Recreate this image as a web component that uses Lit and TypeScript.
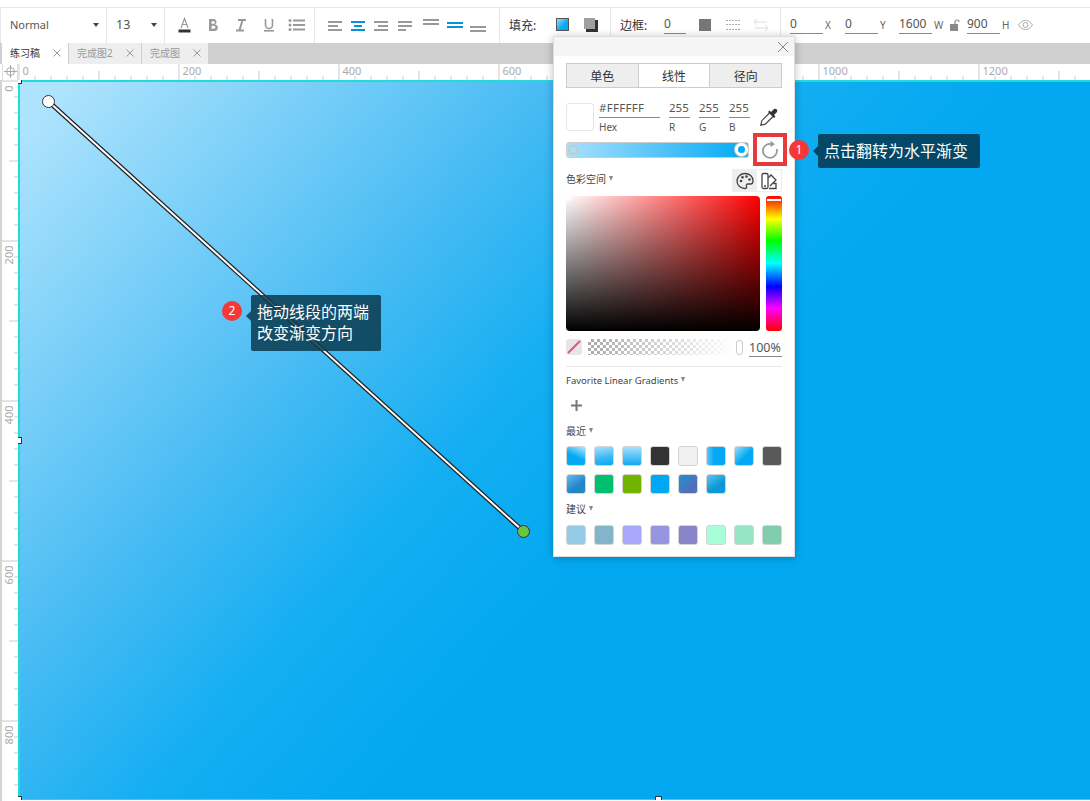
import { LitElement, html, css, svg } from 'lit';
import { customElement } from 'lit/decorators.js';

const RECENT = [
  'linear-gradient(205deg,#b4e6fd 0%,#03a9f4 55%)',
  'linear-gradient(170deg,#a8e0fc 0%,#38b8f6 60%,#03a9f4 100%)',
  'linear-gradient(180deg,#a8e0fc 0%,#10aaf2 100%)',
  '#333333',
  '#f0f0f0',
  'linear-gradient(90deg,#5cc5f8 0%,#03a9f4 40%)',
  'linear-gradient(135deg,#9adcfb 0%,#03a9f4 55%)',
  '#595959',
  'linear-gradient(145deg,#60bdf0 0%,#2386c8 60%)',
  '#00c070',
  '#70b400',
  '#00a8f4',
  'linear-gradient(135deg,#2190d4 0%,#5070b8 70%)',
  'linear-gradient(145deg,#60c4f4 0%,#0c98d8 60%)',
];

const SUGGESTED = ['#94cbe6', '#82b4ca', '#a8a8ff', '#9595e2', '#8a83ca', '#a6ffd8', '#96e6c6', '#82cdac'];

const lines = (rows: number[][], color = '#999', h = 2) => html`
  <svg width="20" height="20" viewBox="0 0 20 20">
    ${rows.map(([x, y, w]) => svg`<rect x=${x} y=${y} width=${w} height=${h} fill=${color}></rect>`)}
  </svg>
`;

const tabClose = html`
  <svg width="8" height="8" viewBox="0 0 8 8"><path d="M.5.5l7 7M7.500.5l-7 7" stroke="#999" fill="none"></path></svg>
`;

@customElement('app-root')
export class AppRoot extends LitElement {
  static styles = css`
    :host {
      display: block;
      position: relative;
      width: 1090px;
      height: 801px;
      overflow: hidden;
      background: #fff;
      font-family: "Noto Sans", "Noto Sans CJK SC", sans-serif;
      color: #444;
    }
    .page {
      display: flex;
      flex-direction: column;
      height: 801px;
      padding-top: 7px;
      box-sizing: border-box;
    }
    .toolbar {
      display: flex;
      height: 35px;
      flex: none;
      border-top: 1px solid #e6e6e6;
      border-left: 1px solid #e6e6e6;
      font-size: 11px;
      color: #555;
    }
    .group {
      display: flex;
      align-items: center;
      border-right: 1px solid #e6e6e6;
      box-sizing: border-box;
      padding-bottom: 2px;
    }
    .g-font { width: 106px; padding-left: 9px; justify-content: space-between; padding-right: 7px; }
    .g-size { width: 58px; padding-left: 9px; justify-content: space-between; padding-right: 7px; font-size: 12.5px; }
    .g-style { width: 150px; padding-left: 6px; }
    .g-align { width: 185px; padding-left: 8px; }
    .g-fill { width: 111px; padding-left: 9px; }
    .g-border { width: 170px; padding-left: 9px; }
    .g-pos { border-right: none; padding-left: 9px; }
    .caret {
      width: 0;
      height: 0;
      border: 3.5px solid transparent;
      border-top: 4px solid #444;
      border-bottom: none;
    }
    .cell {
      width: 28px;
      height: 24px;
      display: flex;
      align-items: center;
      justify-content: center;
      flex: none;
    }
    .g-align .cell { width: 23.4px; }
    .g-align .spaced { margin-left: 3px; }
    .fill-label { flex: none; color: #333; font-size: 12px; }
    .fill-label.w-fill { width: 40px; }
    .fill-label.w-border { width: 44px; }
    .field {
      box-sizing: border-box;
      height: 19px;
      line-height: 17px;
      border-bottom: 1px solid #888;
      flex: none;
      color: #555;
      font-size: 12px;
    }
    .f-border { width: 22px; margin-right: 5px; }
    .f-pos { width: 33px; }
    .unit { flex: none; font-size: 10px; color: #666; padding-left: 2px; box-sizing: border-box; }
    .u-x { width: 22px; }
    .u-y { width: 21px; }
    .u-w { width: 18px; }
    .u-h { width: 18px; }
    .lock { width: 17px; flex: none; display: flex; }
    .eye { display: flex; }

    .tabs {
      display: flex;
      height: 21px;
      flex: none;
      background: #cfcfcf;
      padding-left: 2px;
      gap: 1px;
      font-size: 10px;
    }
    .tab {
      display: flex;
      align-items: center;
      justify-content: space-between;
      padding: 0 7px 2px 8px;
      box-sizing: border-box;
      background: #eeeeee;
      color: #999;
    }
    .tab.on { background: #fff; color: #333; width: 66px; }
    .tab.mid { width: 72px; }
    .tab.last { width: 66px; }

    .ruler-row { display: flex; height: 16px; flex: none; }
    .corner {
      width: 16px;
      margin-left: 2px;
      padding-bottom: 1px;
      display: flex;
      align-items: center;
      justify-content: center;
      flex: none;
      border-left: 1px solid #ddd;
      border-right: 1px solid #ddd;
      box-sizing: border-box;
      background: #fff;
    }
    .work { display: flex; flex: 1; min-height: 0; }
    .v-ruler {
      width: 18px;
      flex: none;
      box-sizing: border-box;
      border-left: 2px solid #d4d4d4;
    }
    .canvas {
      flex: 1;
      position: relative;
      overflow: hidden;
      height: 720px;
      box-shadow: inset 2px 2px 0 #1fdcd8, inset 0 -1px 0 #1fdcd8;
      background: linear-gradient(132deg, #aee3fd 3%, #44baf3 32%, #14aef2 45%, #03a8f1 58%);
    }
    .overlay { position: absolute; left: 0; top: 0; pointer-events: none; }
    .handle {
      position: absolute;
      width: 5px;
      height: 5px;
      background: #fff;
      border: 1px solid #333;
    }
    .h-tl { left: -3px; top: -3px; }
    .h-ml { left: -3px; top: 357px; }
    .h-bl { left: -3px; top: 716px; }
    .h-bm { left: 637px; top: 716px; }

    .panel {
      position: absolute;
      left: 553px;
      top: 36px;
      width: 242px;
      height: 521px;
      background: #fff;
      box-sizing: border-box;
      border: 1px solid #ddd;
      box-shadow: 0 1px 8px rgba(0, 0, 0, 0.25);
      font-size: 10px;
      color: #444;
    }
    .p-head {
      height: 19px;
      background: #f5f5f5;
      display: flex;
      justify-content: flex-end;
      align-items: center;
      padding-right: 4px;
    }
    .p-body { padding: 7px 12px 0 12px; }
    .seg {
      display: flex;
      height: 25px;
      box-sizing: border-box;
      border: 1px solid #ccc;
      background: #eee;
      font-size: 12px;
      color: #333;
    }
    .seg div {
      flex: 1;
      display: flex;
      align-items: center;
      justify-content: center;
    }
    .seg .on { background: #fff; border-left: 1px solid #ccc; border-right: 1px solid #ccc; }
    .color-row { display: flex; margin-top: 15px; height: 28px; }
    .swatch-big {
      width: 28px;
      height: 28px;
      box-sizing: border-box;
      border: 1px solid #e6e6e6;
      border-radius: 3px;
      margin-right: 5px;
      flex: none;
    }
    .chan { display: flex; flex-direction: column; margin-right: 9px; flex: none; }
    .chan .val {
      width: 21px;
      height: 14px;
      flex: none;
      line-height: 10px;
      border-bottom: 1px solid #888;
      font-size: 11.5px;
      color: #555;
      white-space: nowrap;
    }
    .chan.hex .val { width: 61px; letter-spacing: 0.3px; }
    .chan .lab { flex: none; font-size: 10px; line-height: 14px; margin-top: 2px; color: #555; }
    .dropper { flex: none; margin-top: 4px; }
    .bar-row { display: flex; align-items: center; height: 33px; margin-top: 2px; }
    .bar {
      width: 183px;
      height: 16px;
      flex: none;
      box-sizing: border-box;
      border: 1px solid #ccc;
      border-radius: 3px;
      background: linear-gradient(90deg, #a8e0fc 0%, #03a9f4 100%);
      display: flex;
      align-items: center;
      justify-content: space-between;
    }
    .stop {
      box-sizing: border-box;
      border-radius: 50%;
      flex: none;
    }
    .stop.a {
      background: #a8e0fc;
      border: 2px solid #c8c8c8;
      width: 10px;
      height: 10px;
      margin-left: 1px;
    }
    .stop.b {
      background: #03a9f4;
      border: 3px solid #fff;
      box-shadow: 0 0 0 1px #ccc;
      width: 13px;
      height: 13px;
    }
    .flip {
      width: 34px;
      height: 33px;
      flex: none;
      box-sizing: border-box;
      border: 4px solid #e83a3a;
      margin-left: 4px;
      display: flex;
      align-items: center;
      justify-content: center;
    }
    .cs-row { display: flex; align-items: center; justify-content: space-between; height: 23px; margin-top: 3px; }
    .cs-row > span { margin-top: -4px; }
    .arrow {
      display: inline-block;
      margin-left: 3px;
      vertical-align: 2px;
      border-left: 2.5px solid transparent;
      border-right: 2.5px solid transparent;
      border-top: 5px solid #888;
    }
    .toggle { display: flex; height: 23px; border: 1px solid #eee; box-sizing: border-box; }
    .toggle div { width: 24px; display: flex; align-items: center; justify-content: center; }
    .toggle .on { background: #eee; }
    .picker { display: flex; gap: 6px; margin-top: 4px; height: 135px; }
    .sat {
      width: 194px;
      border-radius: 4px;
      background: linear-gradient(0deg, #000, transparent), linear-gradient(90deg, #fff, #f00);
      position: relative;
    }
    .sat::before {
      content: "";
      position: absolute;
      left: 1px;
      top: 1px;
      border-top: 6px solid #fff;
      border-right: 6px solid transparent;
    }
    .hue {
      width: 16px;
      border-radius: 3px;
      background: linear-gradient(180deg, #f00 0%, #ff0 17%, #0f0 33%, #0ff 50%, #00f 67%, #f0f 83%, #f00 100%);
      position: relative;
    }
    .hue::before {
      content: "";
      position: absolute;
      left: 1px;
      right: 1px;
      top: 3px;
      height: 2px;
      background: #fff;
    }
    .alpha-row { display: flex; align-items: center; margin-top: 7px; height: 18px; }
    .none {
      width: 16px;
      height: 16px;
      border-radius: 3px;
      background: #e6e6e6;
      margin-right: 6px;
      flex: none;
    }
    .check {
      width: 147px;
      height: 16px;
      flex: none;
      background-color: #fff;
      background-image: conic-gradient(#aaa 25%, #fff 0 50%, #aaa 0 75%, #fff 0);
      background-size: 6px 6px;
      position: relative;
    }
    .check::after {
      content: "";
      position: absolute;
      inset: 0;
      background: linear-gradient(90deg, rgba(255, 255, 255, 0), #fff);
    }
    .clip {
      width: 7px;
      height: 15px;
      margin-left: 1px;
      border: 1px solid #ccc;
      border-radius: 3px;
      box-sizing: border-box;
      flex: none;
    }
    .pct {
      margin: 2px 0 0 6px;
      width: 33px;
      flex: none;
      font-size: 12.5px;
      line-height: 17px;
      border-bottom: 1px solid #888;
      color: #555;
      white-space: nowrap;
    }
    .rule { height: 1px; background: #e6e6e6; margin-top: 10px; }
    .head { font-size: 10px; line-height: 14px; color: #444; }
    .fav { margin-top: 7px; font-size: 9.5px; }
    .plus { height: 22px; margin-top: 6px; padding-left: 5px; display: flex; align-items: center; }
    .recent { margin-top: 8px; }
    .swatches {
      display: grid;
      grid-template-columns: repeat(8, 20px);
      gap: 8px;
      margin-top: 8px;
    }
    .sw {
      height: 20px;
      box-sizing: border-box;
      border: 1px solid #d4d4d4;
      border-radius: 3px;
    }
    .sugg { margin-top: 8px; }
    .sugg + .swatches { margin-top: 9px; }

    .badge {
      position: absolute;
      width: 20px;
      height: 20px;
      border-radius: 50%;
      background: #f43838;
      color: #fff;
      font-size: 12px;
      line-height: 20px;
      text-align: center;
    }
    .b-1 { left: 789px; top: 140px; }
    .b-2 { left: 222px; top: 301px; }
    .tip {
      position: absolute;
      box-sizing: border-box;
      color: #fff;
      font-size: 16px;
      border-radius: 2px;
      padding: 6px;
    }
    .tip::before {
      content: "";
      position: absolute;
      left: -5px;
      top: 50%;
      margin-top: -5px;
      border-top: 5px solid transparent;
      border-bottom: 5px solid transparent;
      border-right: 5px solid transparent;
    }
    .tip-1 { left: 818px; top: 134px; width: 162px; height: 34px; background: #044766; line-height: 22px; }
    .tip-1::before { border-right-color: #044766; }
    .tip-2 {
      left: 251px;
      top: 295px;
      width: 130px;
      height: 56px;
      background: rgba(10, 58, 78, 0.85);
      line-height: 21px;
      padding: 7px 6px;
    }
    .tip-2::before { border-right-color: #1c5068; top: 16px; margin-top: 0; }
  `;

  hRuler() {
    const ticks = [];
    for (let i = 0; i <= 68; i++) {
      const x = 0.5 + i * 16;
      const h = i % 10 === 0 ? 16 : i % 5 === 0 ? 9 : 4;
      ticks.push(svg`<rect x=${x} y=${16 - h} width="1" height=${h} fill="#ccc"></rect>`);
      // the 800 label sits under the colour panel
      if (i % 10 === 0 && i !== 40) {
        ticks.push(svg`<text x=${x + 4} y="11" font-size="11" fill="#aaa" font-family="Noto Sans">${i * 20}</text>`);
      }
    }
    return html`<svg width="1072" height="16">${ticks}</svg>`;
  }

  vRuler() {
    const ticks = [];
    for (let i = 0; i <= 45; i++) {
      const y = 0.5 + i * 16;
      const w = i % 10 === 0 ? 16 : i % 5 === 0 ? 9 : 4;
      ticks.push(svg`<rect x=${16 - w} y=${y} width=${w} height="1" fill="#ccc"></rect>`);
      if (i % 10 === 0) {
        ticks.push(svg`<text transform="translate(11 ${y + 5}) rotate(-90)" text-anchor="end" font-size="11" fill="#aaa" font-family="Noto Sans">${i * 20}</text>`);
      }
    }
    return html`<svg width="16" height="720">${ticks}</svg>`;
  }

  toolbar() {
    return html`
      <div class="toolbar">
        <div class="group g-font"><span>Normal</span><i class="caret"></i></div>
        <div class="group g-size"><span>13</span><i class="caret"></i></div>
        <div class="group g-style">
          <div class="cell">
            <svg width="16" height="18" viewBox="0 0 16 18">
              <path d="M4 12 7.500 2.500 11 12M5.300 8.500h4.400" fill="none" stroke="#999" stroke-width="1.200"></path>
              <rect x="1.500" y="13.500" width="12" height="3" fill="#333"></rect>
            </svg>
          </div>
          <div class="cell">
            <svg width="14" height="16" viewBox="0 0 14 16">
              <path d="M3 2h5a3 3 0 0 1 1 5.600A3.200 3.200 0 0 1 8 14H3zM5.600 4.200v2.600H7.600a1.300 1.300 0 0 0 0-2.600zM5.600 8.800v3h2.300a1.500 1.500 0 0 0 0-3z" fill="#999" fill-rule="evenodd"></path>
            </svg>
          </div>
          <div class="cell">
            <svg width="14" height="16" viewBox="0 0 14 16">
              <path d="M4 3h8M2 13.500h8M8.600 3 5.400 13.500" fill="none" stroke="#999" stroke-width="2"></path>
            </svg>
          </div>
          <div class="cell">
            <svg width="14" height="16" viewBox="0 0 14 16">
              <path d="M3.500 2v6a3.500 3.500 0 0 0 7 0V2" fill="none" stroke="#999" stroke-width="1.600"></path>
              <rect x="2" y="13" width="10" height="1.600" fill="#999"></rect>
            </svg>
          </div>
          <div class="cell">
            <svg width="18" height="14" viewBox="0 0 18 14">
              <g fill="#999">
                <circle cx="2" cy="2.500" r="1.500"></circle><circle cx="2" cy="7" r="1.500"></circle><circle cx="2" cy="11.500" r="1.500"></circle>
                <rect x="5" y="1.500" width="12" height="2"></rect><rect x="5" y="6" width="12" height="2"></rect><rect x="5" y="10.500" width="12" height="2"></rect>
              </g>
            </svg>
          </div>
        </div>
        <div class="group g-align">
          <div class="cell">${lines([[3, 6, 14], [3, 10, 10], [3, 14, 14]])}</div>
          <div class="cell">${lines([[3, 6, 14], [6, 10, 8], [3, 14, 14]], '#0a8fdc')}</div>
          <div class="cell">${lines([[3, 6, 14], [7, 10, 10], [3, 14, 14]])}</div>
          <div class="cell">${lines([[3, 6, 14], [3, 10, 14], [3, 14, 8]])}</div>
          <div class="cell spaced">${lines([[2, 4, 16], [2, 8, 16]])}</div>
          <div class="cell">${lines([[2, 7, 16], [2, 11, 16]], '#0a8fdc')}</div>
          <div class="cell">${lines([[2, 11, 16], [2, 15, 16]])}</div>
        </div>
        <div class="group g-fill">
          <span class="fill-label w-fill">填充:</span>
          <div class="cell">
            <svg width="14" height="14"><defs><linearGradient id="ff" x1="0" y1="0" x2="1" y2="1"><stop offset="0" stop-color="#a8e0fc"></stop><stop offset=".6" stop-color="#03a9f4"></stop></linearGradient></defs><rect x=".5" y=".5" width="12" height="12" fill="url(#ff)" stroke="#555"></rect></svg>
          </div>
          <div class="cell">
            <svg width="14" height="14"><rect x="2" y="2" width="12" height="12" fill="#333"></rect><rect x="0" y="0" width="11" height="11" fill="#a0a0a0"></rect></svg>
          </div>
        </div>
        <div class="group g-border">
          <span class="fill-label w-border">边框:</span>
          <span class="field f-border">0</span>
          <div class="cell">
            <svg width="12" height="12"><rect width="12" height="12" fill="#777"></rect></svg>
          </div>
          <div class="cell">
            <svg width="16" height="12" viewBox="0 0 16 12"><path d="M1 1.500h14M1 5.500h14M1 10.500h14" fill="none" stroke="#aaa" stroke-dasharray="2 1"></path></svg>
          </div>
          <div class="cell">
            <svg width="16" height="14" viewBox="0 0 16 14"><path d="M1 4h13M4 1 1 4l3 3M2 10h13M12 7l3 3-3 3" fill="none" stroke="#ddd"></path></svg>
          </div>
        </div>
        <div class="group g-pos">
          <span class="field f-pos">0</span><span class="unit u-x">X</span>
          <span class="field f-pos">0</span><span class="unit u-y">Y</span>
          <span class="field f-pos">1600</span><span class="unit u-w">W</span>
          <span class="lock">
            <svg width="10" height="12" viewBox="0 0 10 12"><rect x="0" y="5" width="8" height="7" fill="#888"></rect><path d="M5 5V3a2 2 0 0 1 4 0" fill="none" stroke="#888" stroke-width="1.200"></path></svg>
          </span>
          <span class="field f-pos">900</span><span class="unit u-h">H</span>
          <span class="eye">
            <svg width="15" height="10" viewBox="0 0 15 10"><path d="M.5 5C3 1.500 5 .5 7.500 .5S12 1.500 14.500 5C12 8.500 10 9.500 7.500 9.500S3 8.500 .5 5z" fill="none" stroke="#aaa"></path><circle cx="7.500" cy="5" r="2.500" fill="none" stroke="#aaa"></circle></svg>
          </span>
        </div>
      </div>
    `;
  }

  panel() {
    return html`
      <div class="panel">
        <div class="p-head">
          <svg width="14" height="14" viewBox="0 0 14 14"><path d="M2 2l10 10M12 2 2 12" stroke="#888" fill="none"></path></svg>
        </div>
        <div class="p-body">
          <div class="seg"><div>单色</div><div class="on">线性</div><div>径向</div></div>
          <div class="color-row">
            <div class="swatch-big"></div>
            <div class="chan hex"><span class="val">#FFFFFF</span><span class="lab">Hex</span></div>
            <div class="chan"><span class="val">255</span><span class="lab">R</span></div>
            <div class="chan"><span class="val">255</span><span class="lab">G</span></div>
            <div class="chan"><span class="val">255</span><span class="lab">B</span></div>
            <svg class="dropper" width="20" height="20" viewBox="0 0 20 20">
              <path d="M10.500 6 2.800 13.700 1.800 18.200 6.300 17.200 14 9.500" fill="#fff" stroke="#444" stroke-width="1.200"></path>
              <path d="M9 5l6 6 1.500-1.500-1.500-1.500 3-3a2.200 2.200 0 0 0-3-3l-3 3-1.500-1.500z" fill="#333"></path>
            </svg>
          </div>
          <div class="bar-row">
            <div class="bar"><i class="stop a"></i><i class="stop b"></i></div>
            <div class="flip">
              <svg width="18" height="20" viewBox="0 0 18 20">
                <path d="M11.500 4.300A7 7 0 1 0 15.700 9" fill="none" stroke="#999" stroke-width="1.800"></path>
                <path d="M9.500 .8 14 4.200 9.500 7z" fill="#999"></path>
              </svg>
            </div>
          </div>
          <div class="cs-row">
            <span>色彩空间<i class="arrow"></i></span>
            <div class="toggle">
              <div class="on">
                <svg width="18" height="18" viewBox="0 0 18 18">
                  <path d="M9 1.500C4.500 1.500 1 4.800 1 9s3.500 7.500 8 7.500c1.500 0 2-1 1.500-2-.6-1.200 0-2.500 1.500-2.500h2.500c1.500 0 2.500-1 2.500-3C17 4.500 13.500 1.500 9 1.500z" fill="none" stroke="#444" stroke-width="1.300"></path>
                  <circle cx="5" cy="9" r="1.300" fill="#444"></circle><circle cx="6.500" cy="5.300" r="1.300" fill="#444"></circle><circle cx="10.500" cy="4.500" r="1.300" fill="#444"></circle><circle cx="13.500" cy="7.500" r="1.300" fill="#444"></circle>
                </svg>
              </div>
              <div>
                <svg width="18" height="18" viewBox="0 0 18 18">
                  <rect x="2" y="1.500" width="6" height="15" rx="1.500" fill="none" stroke="#444" stroke-width="1.300"></rect>
                  <path d="M8 6l3-3 5 5-6 6M9 16.500h7v-5h-2.500" fill="none" stroke="#444" stroke-width="1.300"></path>
                  <circle cx="5" cy="14" r="1" fill="#444"></circle>
                </svg>
              </div>
            </div>
          </div>
          <div class="picker"><div class="sat"></div><div class="hue"></div></div>
          <div class="alpha-row">
            <div class="none">
              <svg width="16" height="16"><path d="M2 14 14 2" stroke="#f0506e" stroke-width="2"></path></svg>
            </div>
            <div class="check"></div>
            <div class="clip"></div>
            <div class="pct">100%</div>
          </div>
          <div class="rule"></div>
          <div class="head fav">Favorite Linear Gradients<i class="arrow"></i></div>
          <div class="plus">
            <svg width="11" height="11"><path d="M5.500 0v11M0 5.500h11" stroke="#777" stroke-width="2"></path></svg>
          </div>
          <div class="head recent">最近<i class="arrow"></i></div>
          <div class="swatches">${RECENT.map(c => html`<div class="sw" style="background:${c}"></div>`)}</div>
          <div class="head sugg">建议<i class="arrow"></i></div>
          <div class="swatches">${SUGGESTED.map(c => html`<div class="sw" style="background:${c}"></div>`)}</div>
        </div>
      </div>
    `;
  }

  render() {
    return html`
      <div class="page">
        ${this.toolbar()}
        <div class="tabs">
          <div class="tab on"><span>练习稿</span>${tabClose}</div>
          <div class="tab mid"><span>完成图2</span>${tabClose}</div>
          <div class="tab last"><span>完成图</span>${tabClose}</div>
        </div>
        <div class="ruler-row">
          <div class="corner">
            <svg width="13" height="13" viewBox="0 0 13 13"><circle cx="6.500" cy="6.500" r="4" fill="none" stroke="#aaa"></circle><path d="M6.500 0v13M0 6.500h13" stroke="#aaa"></path></svg>
          </div>
          ${this.hRuler()}
        </div>
        <div class="work">
          <div class="v-ruler">${this.vRuler()}</div>
          <div class="canvas">
            <i class="handle h-tl"></i>
            <i class="handle h-ml"></i>
            <i class="handle h-bl"></i>
            <i class="handle h-bm"></i>
          </div>
        </div>
      </div>

      <svg class="overlay" width="1090" height="801">
        <line x1="48" y1="101" x2="523" y2="531" stroke="#222" stroke-width="4.500"></line>
        <line x1="48" y1="101" x2="523" y2="531" stroke="#fff" stroke-width="2"></line>
        <circle cx="48.500" cy="101.500" r="6" fill="#fff" stroke="#333"></circle>
        <circle cx="523.500" cy="531.500" r="6" fill="#63c73f" stroke="#333"></circle>
      </svg>

      ${this.panel()}

      <div class="badge b-1">1</div>
      <div class="tip tip-1">点击翻转为水平渐变</div>
      <div class="badge b-2">2</div>
      <div class="tip tip-2">拖动线段的两端<br />改变渐变方向</div>
    `;
  }
}
